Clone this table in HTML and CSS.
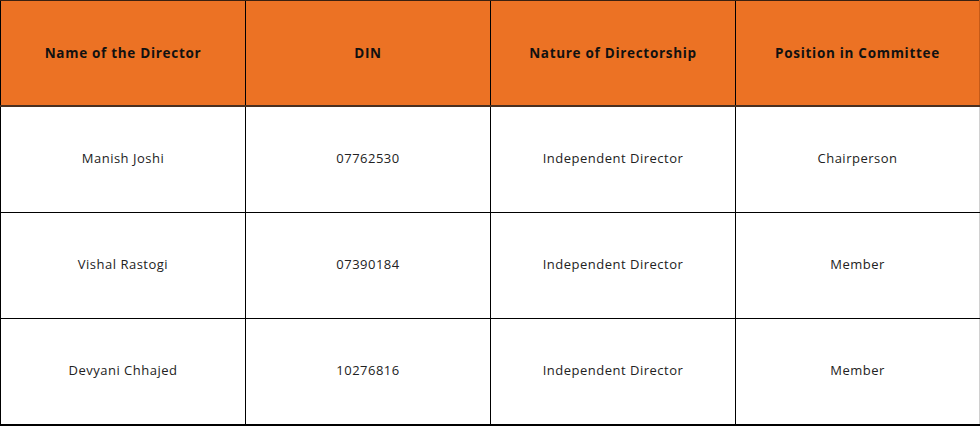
FILE: index.html
```html
<!DOCTYPE html>
<html>
<head>
<meta charset="utf-8">
<link rel="stylesheet" href="styles.css">
</head>
<body>
<table class="dir-table">
  <thead>
    <tr>
      <th>Name of the Director</th>
      <th>DIN</th>
      <th>Nature of Directorship</th>
      <th>Position in Committee</th>
    </tr>
  </thead>
  <tbody>
    <tr>
      <td>Manish Joshi</td>
      <td>07762530</td>
      <td>Independent Director</td>
      <td>Chairperson</td>
    </tr>
    <tr>
      <td>Vishal Rastogi</td>
      <td>07390184</td>
      <td>Independent Director</td>
      <td>Member</td>
    </tr>
    <tr>
      <td>Devyani Chhajed</td>
      <td>10276816</td>
      <td>Independent Director</td>
      <td>Member</td>
    </tr>
  </tbody>
</table>
</body>
</html>
```

FILE: styles.css
```css
html, body {
  margin: 0;
  padding: 0;
  background: #ffffff;
}

.dir-table {
  border-collapse: collapse;
  table-layout: fixed;
  font-family: "Open Sans", "Noto Sans", sans-serif;
  color: #111111;
}

.dir-table th,
.dir-table td {
  width: 244px;
  text-align: center;
  vertical-align: middle;
  padding: 0;
  border-left: 1px solid #000000;
  border-bottom: 1px solid #000000;
}

.dir-table th:last-child,
.dir-table td:last-child {
  width: 243px;
  border-right: 1px solid #d0d0d0;
}

.dir-table th {
  height: 104px;
  background: #ec7224;
  font-size: 13.5px;
  font-weight: 700;
  letter-spacing: 0.7px;
  border-top: 1px solid #3a2010;
  border-bottom: 2px solid #4a3020;
}

.dir-table th:last-child {
  border-right-color: #c45a18;
}

.dir-table td {
  height: 101px;
  padding-bottom: 4px;
  font-size: 13px;
  font-weight: 400;
  letter-spacing: 0.5px;
  color: #222222;
}

.dir-table tbody tr:last-child td {
  border-bottom: 2px solid #000000;
}
```
